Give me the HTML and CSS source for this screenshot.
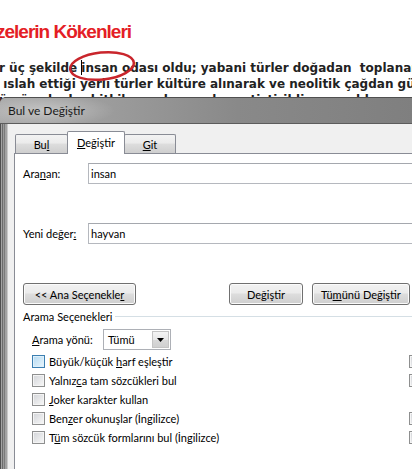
FILE: index.html
```html
<!DOCTYPE html>
<html lang="tr">
<head>
<meta charset="utf-8">
<title>Bul ve Değiştir</title>
<link rel="stylesheet" href="styles.css">
</head>
<body>
<div class="page">
  <h1 class="heading">zelerin Kökenleri</h1>
  <div class="para">
    <div class="line">r üç şekilde <span class="caret"></span>insan odası oldu; yabani türler doğadan  toplanar</div>
    <div class="line"> ıslah ettiği yerli türler kültüre alınarak ve neolitik çağdan gün</div>
    <div class="line">ümüze kadar bitkiler ve hayvanlar yetiştirildi ve yayıldı</div>
  </div>
  <svg class="annot" viewBox="0 0 74 36" width="74" height="36">
    <ellipse cx="37" cy="18" rx="32" ry="13.5" transform="rotate(-6 37 18)" fill="none" stroke="#c9252c" stroke-width="2.5"/>
  </svg>

  <div class="dialog">
    <div class="titlebar"><span class="title">Bul ve Değiştir</span></div>
    <div class="frame">
      <div class="frame-left"></div>
      <div class="client">
        <div class="tabs">
          <div class="tab tab-find"><span>Bu<u>l</u></span></div>
          <div class="tab tab-active"><span><u>D</u>eğiştir</span></div>
          <div class="tab tab-goto"><span><u>G</u>it</span></div>
        </div>
        <div class="panel">
          <div class="field-row">
            <span class="field-label">Ara<u>n</u>an:</span>
            <div class="input"><span>insan</span></div>
          </div>
          <div class="field-row row2">
            <span class="field-label">Yeni değer<u>:</u></span>
            <div class="input"><span>hayvan</span></div>
          </div>
          <div class="buttons">
            <div class="btn btn-more"><span>&lt;&lt; Ana Seçenekle<u>r</u></span></div>
            <div class="btn btn-rep"><span>De<u>ğ</u>iştir</span></div>
            <div class="btn btn-all"><span>Tü<u>m</u>ünü Değiştir</span></div>
            <div class="btn btn-next"><span>Sonrakini Bul</span></div>
          </div>
          <div class="group"><span>Arama Seçenekleri</span></div>
          <div class="dir-row">
            <span class="dir-label"><u>A</u>rama yönü:</span>
            <div class="select">
              <span class="select-val"><span>Tümü</span></span>
              <span class="drop"><svg viewBox="0 0 7 4" width="7" height="4"><path d="M0 0H7L3.5 4Z" fill="#000"/></svg></span>
            </div>
          </div>
          <div class="options">
            <div class="opt"><span class="cb-label"><span class="cb cb-hover"></span><span>Büyük/küçük <u>h</u>arf eşleştir</span></span><span class="cb"></span></div>
            <div class="opt"><span class="cb-label"><span class="cb"></span><span>Yalnız<u>c</u>a tam sözcükleri bul</span></span><span class="cb"></span></div>
            <div class="opt"><span class="cb-label"><span class="cb"></span><span><u>J</u>oker karakter kullan</span></span><span></span></div>
            <div class="opt"><span class="cb-label"><span class="cb"></span><span>Ben<u>z</u>er okunuşlar (İngilizce)</span></span><span class="cb"></span></div>
            <div class="opt"><span class="cb-label"><span class="cb"></span><span>T<u>ü</u>m sözcük formlarını bul (İngilizce)</span></span><span class="cb"></span></div>
          </div>
        </div>
      </div>
    </div>
  </div>
</div>
</body>
</html>
```
FILE: styles.css
```css
html, body {
  margin: 0;
  padding: 0;
}
body {
  width: 412px;
  height: 469px;
  overflow: hidden;
  background: #fff;
}
.page {
  position: relative;
  width: 412px;
  height: 469px;
  overflow: hidden;
}
.heading {
  margin: 0 0 0 -4px;
  padding-top: 21px;
  font: bold 19px/22px "Liberation Sans", Arial, sans-serif;
  color: #e41e26;
  letter-spacing: -1px;
  white-space: nowrap;
}
.para {
  margin: 17px 0 0 -1px;
  font: bold 12px/16px "DejaVu Sans", Verdana, sans-serif;
  color: #222;
}
.line {
  white-space: pre;
  height: 16px;
}
.caret {
  display: inline-block;
  width: 1px;
  height: 15px;
  background: #000;
  vertical-align: -3px;
  margin-right: -1px;
}
.annot {
  position: absolute;
  left: 65px;
  top: 48px;
}

/* dialog */
.dialog {
  position: absolute;
  left: 0;
  top: 97px;
  bottom: 0;
  width: 432px;
  display: flex;
  flex-direction: column;
  border-top: 1px solid #505050;
  border-top-left-radius: 6px;
  overflow: hidden;
  font: 11px "Lato", sans-serif;
  color: #000;
  background: #8a8a8a;
}
.titlebar {
  flex: none;
  height: 25px;
  border-bottom: 1px solid #5c5c5c;
  display: flex;
  align-items: center;
  padding-left: 8px;
  background:
    radial-gradient(ellipse 70px 16px at 45px 50%, rgba(255,255,255,0.35), rgba(255,255,255,0) 100%),
    linear-gradient(to right, #a9a9a9 0%, #9c9c9c 25%, #898989 55%, #7e7e7e 100%);
}
.title {
  font-size: 12px;
  color: #1a1a1a;
}
.frame {
  flex: 1;
  display: flex;
}
.frame-left {
  flex: none;
  width: 8px;
  background: linear-gradient(to right,
    #4f4f4f 0 1px, #a4a4a4 1px 2px, #6c6c6c 2px 3px, #9a9a9a 3px 4px,
    #7a7a7a 4px 5px, #a2a2a2 5px 7px, #c9c9c9 7px 8px);
}
.client {
  flex: 1;
  display: flex;
  flex-direction: column;
  background: #f0f0f0;
  padding: 7px 0 0 6px;
}
.tabs {
  position: relative;
  z-index: 1;
  display: flex;
  align-items: flex-end;
  height: 22px;
  padding-left: 1px;
}
.tab {
  box-sizing: border-box;
  height: 19px;
  border: 1px solid #898c95;
  border-bottom: none;
  border-radius: 2px 2px 0 0;
  display: flex;
  align-items: center;
  justify-content: center;
  background: linear-gradient(#f3f3f3, #ebebeb 45%, #dddddd 50%, #cfcfcf);
}
.tab + .tab {
  margin-left: -1px;
}
.tab-find {
  width: 53px;
}
.tab-active {
  width: 58px;
  height: 23px;
  margin-bottom: -1px;
  padding-bottom: 1px;
  background: #fff;
}
.tab-goto {
  width: 52px;
}
.panel {
  flex: 1;
  background: #fff;
  border-top: 1px solid #898c95;
  border-left: 1px solid #898c95;
  padding: 9px 0 0 8px;
}
.field-row {
  display: flex;
  align-items: center;
  height: 21px;
}
.field-label {
  flex: none;
  width: 65px;
}
.input {
  box-sizing: border-box;
  flex: none;
  width: 340px;
  height: 21px;
  border: 1px solid #b5b8be;
  border-top-color: #a5a8ae;
  padding-left: 2px;
  display: flex;
  align-items: center;
}
.row2 {
  margin-top: 39px;
}
.buttons {
  margin-top: 39px;
  display: flex;
  gap: 9px;
}
.btn {
  box-sizing: border-box;
  flex: none;
  height: 22px;
  border: 1px solid #707070;
  border-radius: 3px;
  background: linear-gradient(#f2f2f2, #ebebeb 45%, #dddddd 50%, #cfcfcf);
  box-shadow: inset 0 0 0 1px #fbfbfb;
  display: flex;
  align-items: center;
  justify-content: center;
  white-space: nowrap;
}
.btn-more {
  width: 113px;
  margin-right: 84px;
}
.btn-rep {
  width: 74px;
}
.btn-all {
  width: 98px;
}
.btn-next {
  width: 80px;
}
.group {
  margin-top: 3px;
  height: 16px;
  display: flex;
  align-items: center;
  gap: 3px;
}
.group::after {
  content: "";
  flex: 1;
  height: 1px;
  background: #d5dfe5;
}
.dir-row {
  margin-top: 5px;
  padding-left: 9px;
  display: flex;
  align-items: center;
  height: 21px;
}
.dir-label {
  flex: none;
  width: 71px;
}
.select {
  box-sizing: border-box;
  width: 68px;
  height: 21px;
  border: 1px solid #adb0b6;
  display: flex;
  background: #fff;
}
.select-val {
  flex: 1;
  padding-left: 4px;
  display: flex;
  align-items: center;
}
.drop {
  box-sizing: border-box;
  flex: none;
  width: 17px;
  margin: 1px;
  border: 1px solid #c4c4c4;
  background: linear-gradient(#f4f4f4, #e8e8e8 50%, #d9d9d9 50%, #d0d0d0);
  display: flex;
  align-items: center;
  justify-content: center;
}
.options {
  margin-top: 2px;
  padding-left: 9px;
}
.opt {
  display: grid;
  grid-template-columns: 377px 13px;
  height: 19px;
  align-items: center;
}
.cb-label {
  display: flex;
  align-items: center;
  gap: 4px;
  white-space: nowrap;
}
.cb {
  box-sizing: border-box;
  flex: none;
  width: 13px;
  height: 13px;
  border: 1px solid #8e8f8f;
  background: linear-gradient(135deg, #d2d4d8, #f8f8f8);
  box-shadow: inset 0 0 0 1px #f4f4f4;
}
.cb-hover {
  border-color: #3c7fb1;
  background: linear-gradient(135deg, #b5d9f1, #e8f6fd);
  box-shadow: inset 0 0 0 1px #def0fb;
}
```
